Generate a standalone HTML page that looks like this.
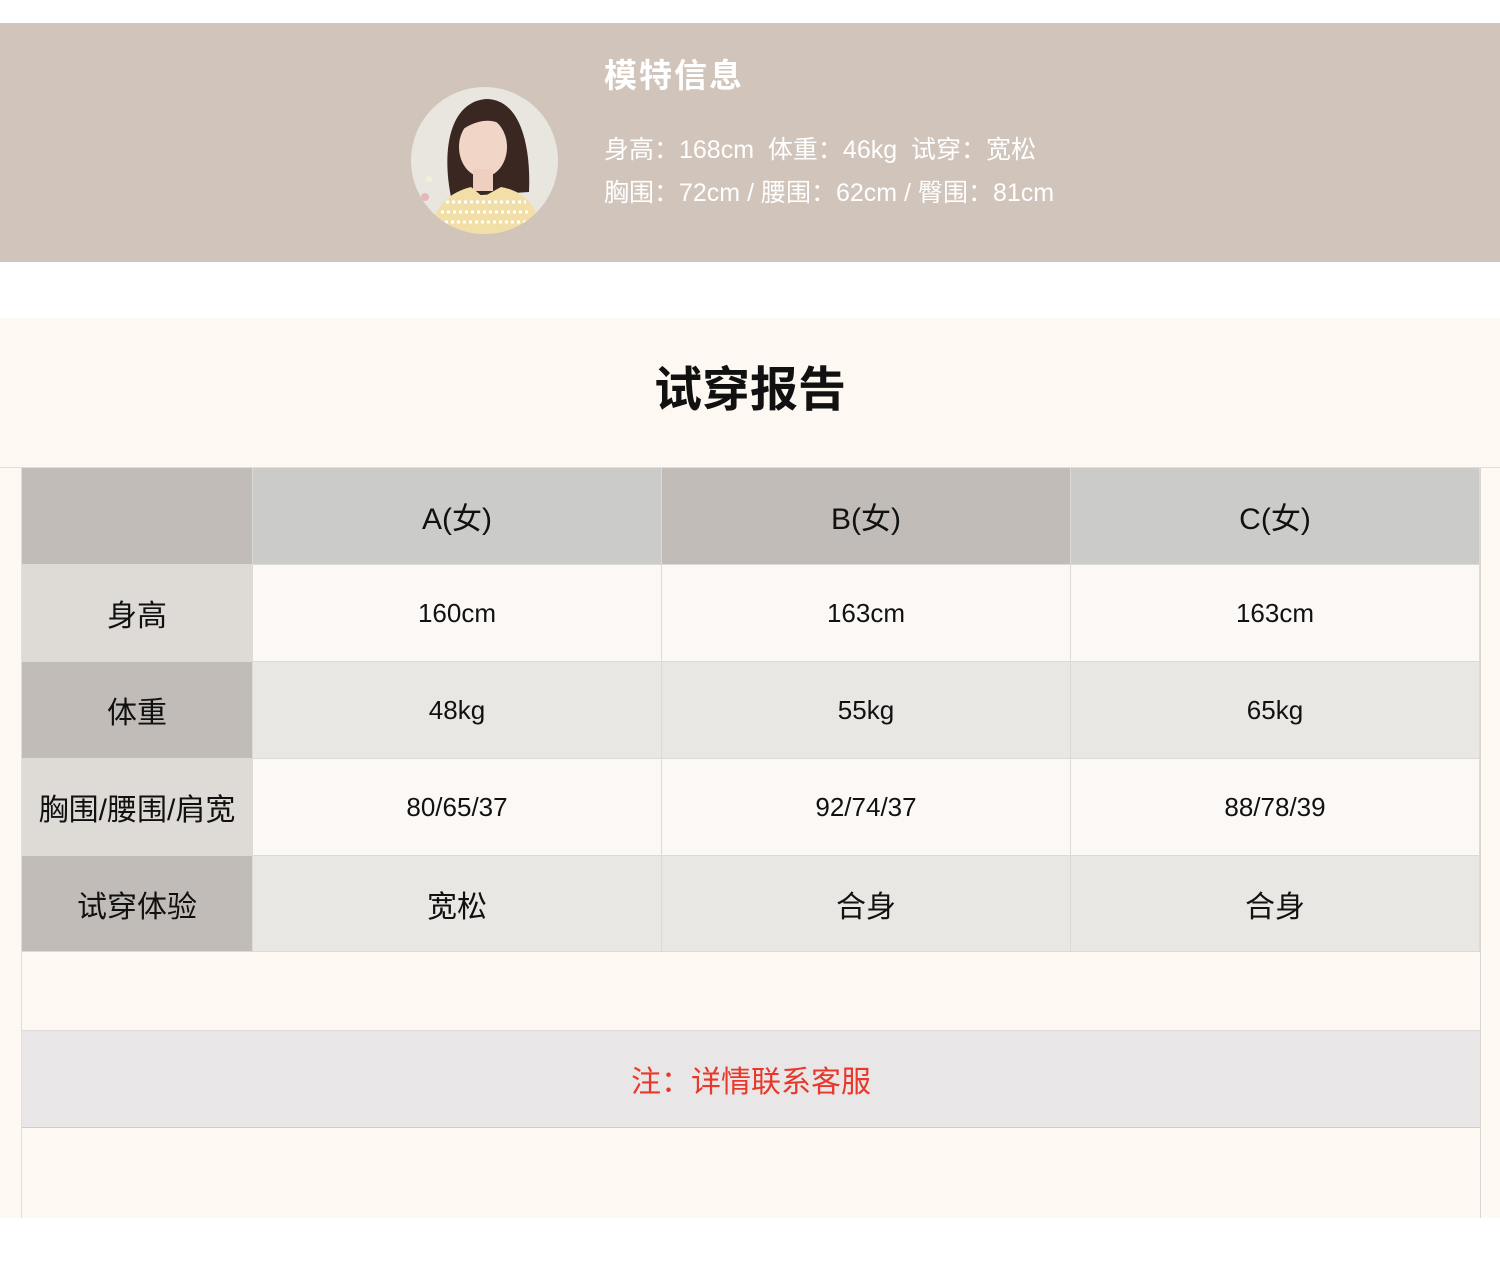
<!DOCTYPE html>
<html><head><meta charset="utf-8"><style>
*{margin:0;padding:0;box-sizing:border-box}
body{width:1500px;height:1267px;background:#fff;position:relative;overflow:hidden;font-family:"Liberation Sans","Noto Sans CJK SC",sans-serif}
.a{position:absolute}
.c{position:absolute;display:flex;align-items:center;justify-content:center;color:#111;font-size:30px;border-right:1px solid #ddd9d4;border-bottom:1px solid #ddd9d4}
.n{font-size:26px}
</style></head><body>
<div class="a" style="left:0;top:23px;width:1500px;height:239px;background:#d0c4bb"></div>
<svg class="a" style="left:411px;top:87px" width="147" height="147" viewBox="0 0 147 147">
<defs><clipPath id="cp"><circle cx="73.5" cy="73.5" r="73.5"/></clipPath></defs>
<g clip-path="url(#cp)">
<rect width="147" height="147" fill="#e9e6e0"/>
<path d="M40 110 C30 60 40 15 75 12 C110 12 120 60 118 105 Z" fill="#3a2722"/>
<ellipse cx="72" cy="60" rx="24" ry="30" fill="#f1d5c6"/>
<path d="M48 45 C52 20 95 18 98 45 C90 32 70 28 48 45Z" fill="#3a2722"/>
<rect x="62" y="82" width="20" height="22" fill="#efcfbf"/>
<path d="M20 147 C22 118 40 105 60 100 L72 110 L90 100 C112 104 128 118 130 147Z" fill="#f2dfa8"/>
<path d="M30 125 H120 M28 135 H125 M35 115 H115" stroke="#fff" stroke-width="3" stroke-dasharray="3 3"/>
<circle cx="14" cy="110" r="4" fill="#e8b8b8"/><circle cx="18" cy="92" r="3" fill="#f3efd8"/>
</g></svg>
<div class="a" style="left:604px;top:49px;font-size:33px;font-weight:bold;color:#fff;letter-spacing:2px">模特信息</div>
<div class="a" style="left:604px;top:130px;font-size:25px;color:#fff;white-space:pre">身高：168cm  体重：46kg  试穿：宽松</div>
<div class="a" style="left:604px;top:173px;font-size:25px;color:#fff;white-space:pre">胸围：72cm / 腰围：62cm / 臀围：81cm</div>

<div class="a" style="left:0;top:318px;width:1500px;height:900px;background:#fdf8f2"></div>
<div class="a" style="left:0;top:350px;width:1500px;text-align:center;font-size:48px;font-weight:bold;color:#111">试穿报告</div>
<div class="a" style="left:0;top:467px;width:1500px;height:1px;background:#e2ddd7"></div>
<div class="a" style="left:21px;top:468px;width:1px;height:750px;background:#e2ddd7"></div>
<div class="a" style="left:1480px;top:468px;width:1px;height:750px;background:#d8d4cf"></div>

<div class="c" style="left:22px;top:468px;width:231px;height:97px;background:#c1bcb8"></div>
<div class="c" style="left:253px;top:468px;width:409px;height:97px;background:#cbcbc9">A(女)</div>
<div class="c" style="left:662px;top:468px;width:409px;height:97px;background:#c1bcb8">B(女)</div>
<div class="c" style="left:1071px;top:468px;width:409px;height:97px;background:#cbcbc9">C(女)</div>

<div class="c" style="left:22px;top:565px;width:231px;height:97px;background:#dedbd7">身高</div>
<div class="c n" style="left:253px;top:565px;width:409px;height:97px;background:#fbf8f5">160cm</div>
<div class="c n" style="left:662px;top:565px;width:409px;height:97px;background:#fbf8f5">163cm</div>
<div class="c n" style="left:1071px;top:565px;width:409px;height:97px;background:#fbf8f5">163cm</div>

<div class="c" style="left:22px;top:662px;width:231px;height:97px;background:#c1bcb8">体重</div>
<div class="c n" style="left:253px;top:662px;width:409px;height:97px;background:#e9e7e3">48kg</div>
<div class="c n" style="left:662px;top:662px;width:409px;height:97px;background:#e9e7e3">55kg</div>
<div class="c n" style="left:1071px;top:662px;width:409px;height:97px;background:#e9e7e3">65kg</div>

<div class="c" style="left:22px;top:759px;width:231px;height:97px;background:#dedbd7">胸围/腰围/肩宽</div>
<div class="c n" style="left:253px;top:759px;width:409px;height:97px;background:#fbf8f5">80/65/37</div>
<div class="c n" style="left:662px;top:759px;width:409px;height:97px;background:#fbf8f5">92/74/37</div>
<div class="c n" style="left:1071px;top:759px;width:409px;height:97px;background:#fbf8f5">88/78/39</div>

<div class="c" style="left:22px;top:856px;width:231px;height:96px;background:#c1bcb8">试穿体验</div>
<div class="c" style="left:253px;top:856px;width:409px;height:96px;background:#e9e7e3">宽松</div>
<div class="c" style="left:662px;top:856px;width:409px;height:96px;background:#e9e7e3">合身</div>
<div class="c" style="left:1071px;top:856px;width:409px;height:96px;background:#e9e7e3">合身</div>

<div class="a" style="left:22px;top:1030px;width:1458px;height:98px;background:#e8e6e6;border-top:1px solid #dcdadb;border-bottom:1px solid #cfcdcd;display:flex;align-items:center;justify-content:center;font-size:30px;color:#e8382b">注：详情联系客服</div>
</body></html>
